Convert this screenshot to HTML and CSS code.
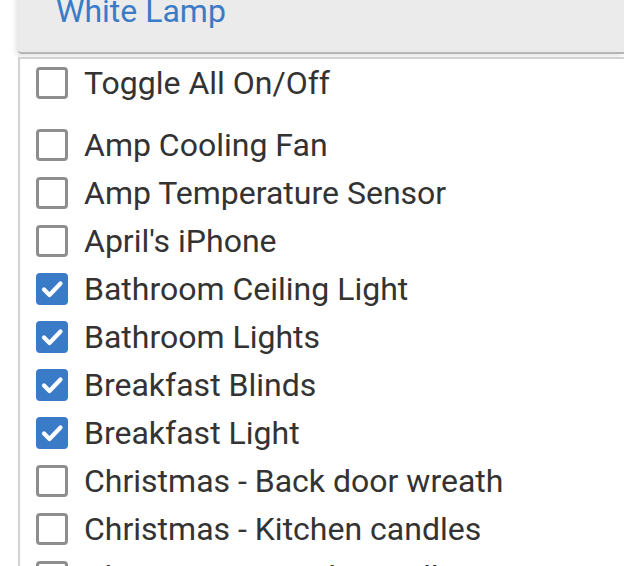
FILE: index.html
```html
<!DOCTYPE html>
<html>
<head>
<meta charset="utf-8">
<link rel="stylesheet" href="styles.css">
</head>
<body>
<div class="page">
  <div class="panel"><span class="panel-title">White Lamp</span></div>
  <div class="list">
    <label class="row toggle"><span class="box"></span><span class="label">Toggle All On/Off</span></label>
    <label class="row"><span class="box"></span><span class="label">Amp Cooling Fan</span></label>
    <label class="row"><span class="box"></span><span class="label">Amp Temperature Sensor</span></label>
    <label class="row"><span class="box"></span><span class="label">April's iPhone</span></label>
    <label class="row"><span class="box checked"><svg viewBox="0 0 32 32" width="32" height="32"><polyline points="8,16.5 13.5,22 24.5,10.5" fill="none" stroke="#fff" stroke-width="4.2" stroke-linecap="round" stroke-linejoin="round"/></svg></span><span class="label">Bathroom Ceiling Light</span></label>
    <label class="row"><span class="box checked"><svg viewBox="0 0 32 32" width="32" height="32"><polyline points="8,16.5 13.5,22 24.5,10.5" fill="none" stroke="#fff" stroke-width="4.2" stroke-linecap="round" stroke-linejoin="round"/></svg></span><span class="label">Bathroom Lights</span></label>
    <label class="row"><span class="box checked"><svg viewBox="0 0 32 32" width="32" height="32"><polyline points="8,16.5 13.5,22 24.5,10.5" fill="none" stroke="#fff" stroke-width="4.2" stroke-linecap="round" stroke-linejoin="round"/></svg></span><span class="label">Breakfast Blinds</span></label>
    <label class="row"><span class="box checked"><svg viewBox="0 0 32 32" width="32" height="32"><polyline points="8,16.5 13.5,22 24.5,10.5" fill="none" stroke="#fff" stroke-width="4.2" stroke-linecap="round" stroke-linejoin="round"/></svg></span><span class="label">Breakfast Light</span></label>
    <label class="row"><span class="box"></span><span class="label">Christmas - Back door wreath</span></label>
    <label class="row"><span class="box"></span><span class="label">Christmas - Kitchen candles</span></label>
    <label class="row"><span class="box"></span><span class="label">Christmas - Mantle candles</span></label>
  </div>
</div>
</body>
</html>
```
FILE: styles.css
```css
html, body {
  margin: 0;
  padding: 0;
  background: #fff;
  overflow: hidden;
}
.page {
  width: 624px;
  height: 566px;
  overflow: hidden;
  font-family: Roboto, "Noto Sans", sans-serif;
}
.panel {
  margin-left: 18px;
  margin-top: -16px;
  height: 70px;
  background: #ebebeb;
  border-bottom: 2px solid #b5b5b5;
  border-bottom-left-radius: 4px;
  box-shadow: -2px 2px 5px rgba(0,0,0,0.12);
  padding-left: 38px;
  box-sizing: border-box;
}
.panel-title {
  display: block;
  font-size: 32px;
  color: #3a7bc8;
  line-height: 36px;
  padding-top: 9px;
}
.list {
  margin-left: 18px;
  margin-top: 3px;
  border-top: 2px solid #d2d2d2;
  border-left: 2px solid #d2d2d2;
  padding-left: 16px;
}
.row {
  display: flex;
  align-items: center;
  height: 48px;
  gap: 16px;
}
.row.toggle {
  margin-bottom: 14px;
}
.box {
  width: 32px;
  height: 32px;
  box-sizing: border-box;
  border: 3px solid #8e8e8e;
  border-radius: 4px;
  flex: none;
  background: #fff;
}
.box.checked {
  border: none;
  background: #3a7bc8;
}
.box svg {
  display: block;
}
.label {
  font-size: 32px;
  color: #333;
  white-space: nowrap;
}
```
